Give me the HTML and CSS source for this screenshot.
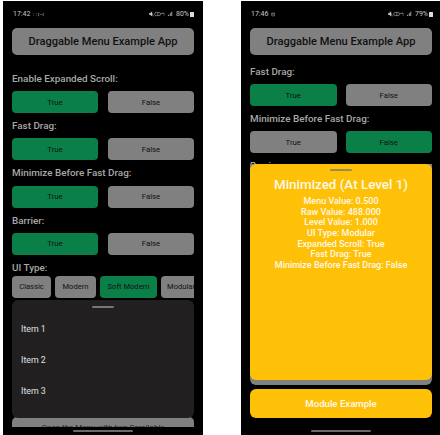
FILE: index.html
```html
<!DOCTYPE html>
<html lang="en">
<head>
<meta charset="utf-8">
<title>Draggable Menu Example App</title>
<link rel="stylesheet" href="styles.css">
</head>
<body>
<main class="stage">
  <section class="phone phone-left">
    <div class="status">
      <div class="status-side"><span>17:42</span>
        <svg class="notif" viewBox="0 0 16 6"><path d="M1 1v1M1 4v1M5 1v1M5 4v1M9 1h-1v4h1M14 1h1v4h-1M10 2.500l1 1 1-1 1 1" /></svg>
      </div>
      <div class="status-side">
        <svg class="sys" viewBox="0 0 30 7"><path class="fill" d="M0 2.500h1.500L4 .5v6L1.500 4.500H0z"/><path d="M2 .5l4 6"/><path d="M9 1.500h3.500a2 2 0 0 1 0 4H9a2 2 0 0 1 0-4zM11 1.500v4M15 3h4M17.500 1.500l1.500 1.500M19 5.500V4"/><path class="fill" d="M24 6l1 0 0-2-1 1zM26 6h1V2l-1 1zM28 6h1V0l-1 1z"/></svg>
        <span>80%</span><i class="battery"></i>
      </div>
    </div>
    <div class="content">
      <h1 class="title">Draggable Menu Example App</h1>
      <h2 class="label label-first">Enable Expanded Scroll:</h2>
      <div class="pair"><button class="btn on">True</button><button class="btn">False</button></div>
      <h2 class="label">Fast Drag:</h2>
      <div class="pair"><button class="btn on">True</button><button class="btn">False</button></div>
      <h2 class="label">Minimize Before Fast Drag:</h2>
      <div class="pair"><button class="btn on">True</button><button class="btn">False</button></div>
      <h2 class="label">Barrier:</h2>
      <div class="pair"><button class="btn on">True</button><button class="btn">False</button></div>
      <h2 class="label label-type">UI Type:</h2>
      <div class="chips">
        <button class="chip chip-classic">Classic</button>
        <button class="chip chip-modern">Modern</button>
        <button class="chip chip-soft on">Soft Modern</button>
        <button class="chip chip-modular">Modular</button>
      </div>
      <div class="sheet-dark">
        <span class="handle"></span>
        <p class="item">Item 1</p>
        <p class="item">Item 2</p>
        <p class="item">Item 3</p>
      </div>
      <button class="wide">Open the Menu with two Scrollable</button>
    </div>
    <div class="home"><span></span></div>
  </section>

  <section class="phone phone-right">
    <div class="status">
      <div class="status-side"><span>17:46</span>
        <svg class="notif" viewBox="0 0 16 6"><path d="M1 1h4v4H1zM1 1l2 2 2-2" /></svg>
      </div>
      <div class="status-side">
        <svg class="sys" viewBox="0 0 30 7"><path class="fill" d="M0 2.500h1.500L4 .5v6L1.500 4.500H0z"/><path d="M2 .5l4 6"/><path d="M9 1.500h3.500a2 2 0 0 1 0 4H9a2 2 0 0 1 0-4zM11 1.500v4M15 3h4M17.500 1.500l1.500 1.500M19 5.500V4"/><path class="fill" d="M24 6l1 0 0-2-1 1zM26 6h1V2l-1 1zM28 6h1V0l-1 1z"/></svg>
        <span>79%</span><i class="battery"></i>
      </div>
    </div>
    <div class="content">
      <h1 class="title">Draggable Menu Example App</h1>
      <h2 class="label label-scrolled">Fast Drag:</h2>
      <div class="pair"><button class="btn on">True</button><button class="btn">False</button></div>
      <h2 class="label">Minimize Before Fast Drag:</h2>
      <div class="pair"><button class="btn">True</button><button class="btn on">False</button></div>
      <h2 class="label">Barrier:</h2>
      <button class="yellow">Module Example</button>
    </div>
    <div class="home"><span></span></div>
    <div class="menu-under">
      <div class="sheet-yellow">
        <span class="handle"></span>
        <h3 class="sheet-title">Minimized (At Level 1)</h3>
        <p>Menu Value: 0.500</p>
        <p>Raw Value: 488.000</p>
        <p>Level Value: 1.000</p>
        <p>UI Type: Modular</p>
        <p>Expanded Scroll: True</p>
        <p>Fast Drag: True</p>
        <p>Minimize Before Fast Drag: False</p>
      </div>
    </div>
  </section>
</main>
</body>
</html>
```
FILE: styles.css
```css
* { box-sizing: border-box; }
html, body { margin: 0; height: 100%; background: #fff; }
body { font-family: Roboto, "Liberation Sans", sans-serif; overflow: hidden; }

.stage { display: flex; height: 435px; padding: 1px 0 0 3px; gap: 38px; }

.phone {
  position: relative;
  display: flex;
  flex-direction: column;
  width: 200px;
  background: #000;
  overflow: hidden;
}
.phone-right { width: 199px; }

.status {
  display: flex;
  justify-content: space-between;
  align-items: center;
  height: 26px;
  padding: 0 9px 0 10px;
  color: #c9c9c9;
  font-size: 7px;
}
.phone-right .status { padding-right: 7px; }
.status-side { display: flex; align-items: center; gap: 3px; }
.notif { width: 11px; height: 5px; fill: none; stroke: #aaa; stroke-width: .8; }
.sys { width: 24px; height: 6px; fill: none; stroke: #bbb; stroke-width: .7; }
.sys .fill { fill: #ccc; stroke: none; }
.battery { display: block; width: 4px; height: 5px; background: #ddd; border-radius: .5px; margin-left: -2px; }

.content {
  display: flex;
  flex-direction: column;
  flex: 1;
  min-height: 0;
  padding: 1px 9px 0;
  overflow: hidden;
}
.phone-right .content { padding-right: 8px; }

.title {
  flex: none;
  display: flex;
  align-items: center;
  justify-content: center;
  height: 27px;
  margin: 0;
  background: #808080;
  border-radius: 5px;
  color: #111;
  font-size: 11.100px;
  font-weight: 500;
}

.label {
  flex: none;
  margin: 0;
  height: 25.330px;
  display: flex;
  align-items: center;
  color: #a8a8a8;
  font-size: 9.900px;
  font-weight: 500;
}
.label-first { margin-top: 11px; height: 25px; }
.label-scrolled { margin-top: 4px; height: 25px; }
.label-type { height: 21px; padding-top: 5px; }

.pair { flex: none; display: flex; gap: 10px; height: 22px; }
.phone-right .pair { gap: 9px; }
.btn, .chip, .wide, .yellow {
  border: 0;
  padding: 0;
  font-family: inherit;
  background: #808080;
  color: #111;
}
.btn {
  flex: 1;
  border-radius: 4px;
  font-size: 7.800px;
}
.on { background: #0a8048; }

.chips {
  flex: none;
  display: flex;
  gap: 4px;
  height: 22px;
  overflow: hidden;
}
.chip { flex: none; height: 22px; border-radius: 4px; font-size: 7.600px; white-space: nowrap; }
.chip-classic { width: 39px; }
.chip-modern { width: 41px; }
.chip-soft { width: 57px; }
.chip-modular { width: 40px; }

.sheet-dark {
  position: relative;
  z-index: 1;
  flex: none;
  height: 118px;
  margin-top: 2px;
  padding-top: 14px;
  background: #211f20;
  border-radius: 6px;
}
.handle {
  position: absolute;
  top: 6px;
  left: 50%;
  width: 22px;
  height: 2px;
  margin-left: -11px;
  border-radius: 1px;
  background: #777;
}
.item {
  height: 31px;
  margin: 0;
  padding-left: 9px;
  display: flex;
  align-items: center;
  color: #e0e0e0;
  font-size: 8.800px;
}

.wide {
  flex: none;
  height: 22px;
  margin-top: -1px;
  border-radius: 5px;
  font-size: 8px;
  color: #222;
  white-space: nowrap;
}

.yellow {
  flex: none;
  height: 29px;
  margin-top: auto;
  margin-bottom: 9px;
  background: #ffc107;
  border-radius: 6px;
  color: #fffaf0;
  font-size: 9.600px;
  font-weight: 500;
}

.home { flex: none; display: flex; justify-content: center; height: 8px; padding-top: 3px; }
.home span { display: block; width: 60px; height: 2px; border-radius: 1px; background: #6a6a6a; }

.menu-under {
  position: absolute;
  top: 163px;
  left: 9px;
  right: 8px;
  height: 221px;
  background: #808080;
  border-radius: 0 0 6px 6px;
}
.sheet-yellow {
  position: relative;
  height: 216px;
  padding-top: 14px;
  background: #ffc107;
  border-radius: 6px;
  color: #fff8e6;
  text-align: center;
  font-size: 9px;
  line-height: 10.650px;
}
.sheet-yellow p { margin: 0; font-weight: 500; }
.sheet-yellow .handle { top: 5px; background: #9a8a55; }
.sheet-title {
  margin: 0 0 4px;
  font-size: 13.400px;
  font-weight: 500;
  line-height: 14px;
  color: #fff8e6;
}
```
